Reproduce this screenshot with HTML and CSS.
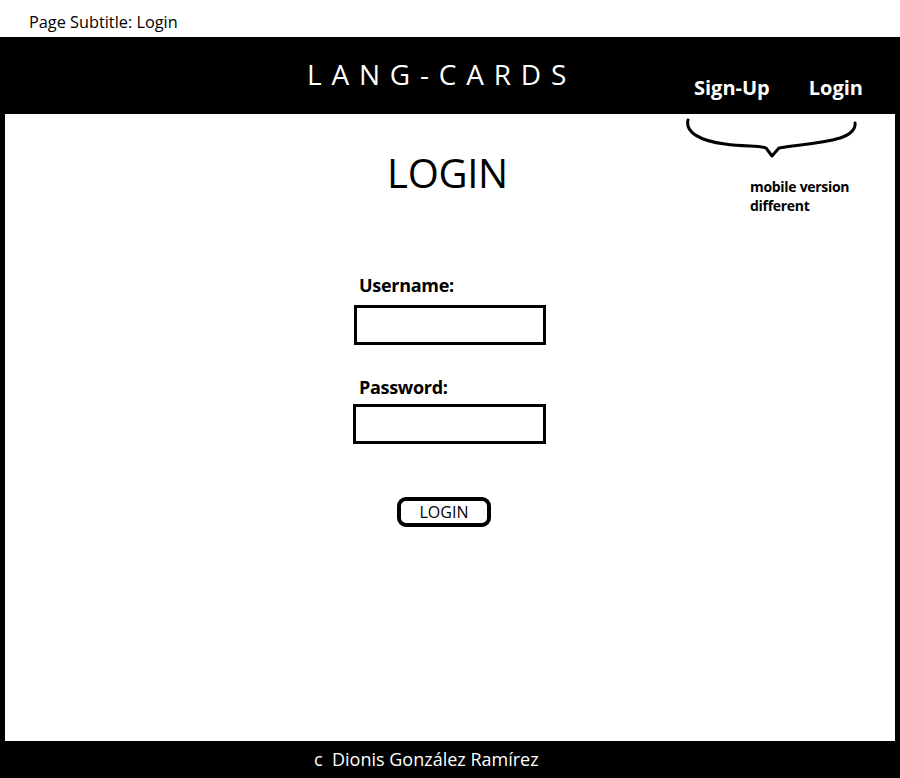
FILE: index.html
```html
<!DOCTYPE html>
<html>
<head>
<meta charset="utf-8">
<link rel="stylesheet" href="styles.css">
</head>
<body>
<div class="subtitle">Page Subtitle: Login</div>
<div class="frame">
  <header class="header">
    <div class="brand">LANG-CARDS</div>
    <nav class="nav">
      <a class="nav-link">Sign-Up</a>
      <a class="nav-link">Login</a>
    </nav>
  </header>
  <main class="main">
    <svg class="brace" width="185" height="50" viewBox="0 0 185 50">
      <path d="M8 6 C 5 18, 20 27, 45 30 C 65 33, 80 31, 86 34 L 92 42 L 99 34 C 115 31, 140 30, 160 24 C 172 20, 176 14, 175 9" fill="none" stroke="#000" stroke-width="3" stroke-linecap="round" stroke-linejoin="round"/>
    </svg>
    <div class="note">mobile version<br>different</div>
    <h1 class="title">LOGIN</h1>
    <form class="form">
      <label class="label">Username:</label>
      <div class="input"></div>
      <label class="label label-pass">Password:</label>
      <div class="input input-pass"></div>
      <div class="btn-row"><span class="btn">LOGIN</span></div>
    </form>
  </main>
  <footer class="footer">c&nbsp; Dionis González Ramírez</footer>
</div>
</body>
</html>
```
FILE: styles.css
```css
* { box-sizing: border-box; }
html, body { margin: 0; padding: 0; }
body {
  width: 900px;
  height: 778px;
  font-family: "Open Sans", "Noto Sans", sans-serif;
  background: #fff;
  color: #000;
  overflow: hidden;
}
.subtitle {
  height: 37px;
  padding: 11px 0 0 29px;
  font-size: 16.3px;
  line-height: 22px;
}
.frame {
  background: #000;
  height: 741px;
  display: flex;
  flex-direction: column;
  padding: 0 5px;
}
.header {
  height: 77px;
  display: flex;
  align-items: flex-start;
}
.brand {
  color: #fff;
  font-size: 28px;
  letter-spacing: 9.8px;
  line-height: 38px;
  padding-top: 18px;
  margin-left: 302px;
}
.nav {
  margin-left: auto;
  display: flex;
  gap: 39px;
  padding-top: 38px;
  padding-right: 32px;
}
.nav-link {
  color: #fff;
  font-weight: 700;
  font-size: 20px;
  line-height: 26px;
}
.main {
  flex: 1;
  background: #fff;
  position: relative;
  display: flex;
  flex-direction: column;
  align-items: center;
}
.brace {
  position: absolute;
  left: 675px;
  top: 0;
}
.note {
  position: absolute;
  left: 745px;
  top: 63px;
  font-size: 14px;
  font-weight: 700;
  line-height: 19px;
  letter-spacing: -0.3px;
}
.title {
  margin: 34px 0 0 -5px;
  font-size: 40px;
  font-weight: 400;
  line-height: 50px;
  letter-spacing: -0.3px;
}
.form {
  margin-top: 75px;
  width: 192px;
  display: flex;
  flex-direction: column;
}
.label {
  font-size: 18px;
  font-weight: 700;
  line-height: 24px;
  padding-left: 5px;
  letter-spacing: -0.3px;
}
.input {
  margin-top: 8px;
  height: 40px;
  border: 3px solid #000;
  background: #fff;
}
.label-pass {
  margin-top: 30px;
}
.input-pass {
  margin-top: 5px;
  margin-left: -1px;
}
.btn-row {
  display: flex;
  justify-content: center;
  margin-top: 53px;
}
.btn {
  display: inline-flex;
  align-items: center;
  justify-content: center;
  width: 94px;
  height: 30px;
  border: 4px solid #000;
  border-radius: 9px;
  font-size: 16px;
  line-height: 20px;
  margin-left: -12px;
}
.footer {
  height: 37px;
  margin: 0 -5px;
  background: #000;
  color: #fff;
  font-size: 18px;
  line-height: 37px;
  padding-left: 314px;
}
```
